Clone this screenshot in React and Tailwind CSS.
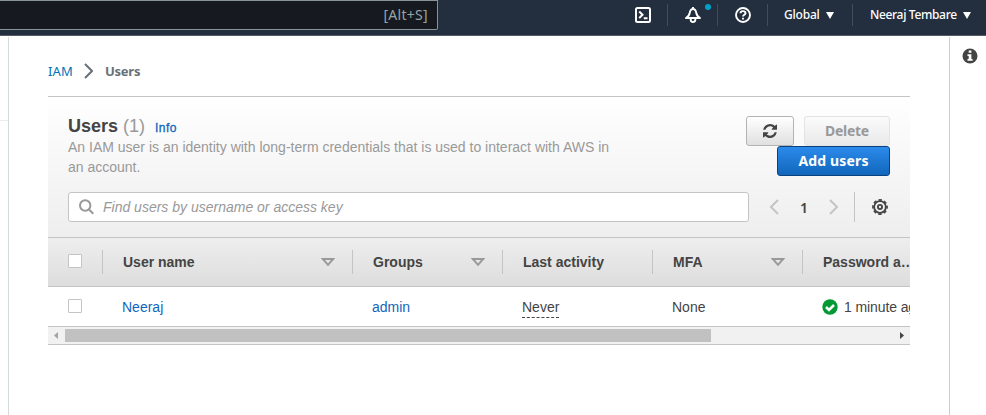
import React from "react";

function Caret() {
  return (
    <svg width="8" height="7" viewBox="0 0 8 7" className="block">
      <path d="M0 0h8L4 7z" fill="#fff" />
    </svg>
  );
}

function NavBar() {
  return (
    <header className="flex h-9 w-full border-b border-[#545b64] bg-[#232f3e] font-['Noto_Sans','Open_Sans',sans-serif] text-white">
      <div className="flex h-[30px] w-[438px] shrink-0 items-center justify-end rounded-br-[2px] border-y border-r border-[#879596] bg-[#161a20] pb-px pr-[9px] text-[14px] tracking-[0.3px] text-[#95a5a6]">
        [Alt+S]
      </div>
      <div className="mt-1 flex h-[22px] w-[230px] justify-end border-r border-[#414d5c] pr-4 pt-[3px]">
        <svg width="16" height="16" viewBox="0 0 16 16" fill="none" stroke="#fff" strokeWidth="2">
          <rect x="1" y="1" width="14" height="14" rx="1.500" />
          <path d="M4.200 4.500 7.500 7.800 4.200 11.100M8.800 11.200h3.700" />
        </svg>
      </div>
      <div className="relative mt-1 flex h-[22px] w-[50px] justify-center border-r border-[#414d5c] pt-[3px]">
        <svg width="16" height="16" viewBox="0 0 16 16" fill="none" stroke="#fff" strokeWidth="1.900" strokeLinejoin="round">
          <path d="M8 0v2M1 11h14c-2.300-1.200-3.300-2.800-3.700-5C10.900 3.600 9.900 2 8 2S5.100 3.600 4.700 6C4.300 8.200 3.300 9.800 1 11z" />
          <path d="M5.700 11.500v1.300c0 1.300 1 2.200 2.300 2.200s2.300-.9 2.300-2.200v-1.300" />
        </svg>
        <span className="absolute left-[37px] top-0 h-[6px] w-[6px] rounded-full bg-[#00a1c9]" />
      </div>
      <div className="mt-1 flex h-[22px] w-[50px] justify-center border-r border-[#414d5c] pt-[3px]">
        <svg width="16" height="16" viewBox="0 0 16 16" fill="none" stroke="#fff" strokeWidth="1.900">
          <circle cx="8" cy="8" r="7" />
          <path d="M5.500 6.300C5.500 4.900 6.600 4.100 8 4.100s2.500.8 2.500 2.100c0 1.500-2.500 1.600-2.500 3.400M8 10.800v1.700" />
        </svg>
      </div>
      <div className="mt-1 flex h-[22px] w-[85px] items-center border-r border-[#414d5c] pl-4">
        <span className="w-[42px] whitespace-nowrap text-[12px] font-medium leading-[22px] tracking-[-0.2px]">Global</span>
        <Caret />
      </div>
      <div className="mt-1 flex h-[22px] items-center pl-[17px]">
        <span className="w-[93px] whitespace-nowrap text-[12px] font-medium leading-[22px] tracking-[-0.33px]">Neeraj Tembare</span>
        <Caret />
      </div>
    </header>
  );
}

function Breadcrumb() {
  return (
    <nav className="flex h-5 items-center font-['Noto_Sans','Open_Sans',sans-serif] text-[13px] leading-5">
      <span className="w-9 tracking-[0.1px] text-[#0073bb]">IAM</span>
      <svg width="9" height="16" viewBox="0 0 9 16" fill="none" stroke="#687078" strokeWidth="2">
        <path d="M1 1l7 7-7 7" />
      </svg>
      <span className="ml-3 font-bold tracking-[-0.25px] text-[#687078]">Users</span>
    </nav>
  );
}

function Pagination() {
  return (
    <div className="flex h-[30px] items-center">
      <svg width="10" height="16" viewBox="0 0 10 16" fill="none" stroke="#c4c4c4" strokeWidth="2" className="ml-5">
        <path d="M9 1 2 8l7 7" />
      </svg>
      <span className="w-[50px] text-center font-['Noto_Sans',sans-serif] text-[14px] font-semibold text-[#444]">1</span>
      <svg width="10" height="16" viewBox="0 0 10 16" fill="none" stroke="#c4c4c4" strokeWidth="2">
        <path d="M1 1l7 7-7 7" />
      </svg>
      <span className="ml-[15px] h-[30px] w-px bg-[#c4c4c4]" />
      <svg width="16" height="16" viewBox="0 0 17 17" fill="none" stroke="#444" className="ml-[17px]">
        <circle cx="8.500" cy="8.500" r="6.200" strokeWidth="1.900" />
        <circle cx="8.500" cy="8.500" r="7.500" strokeWidth="1.800" strokeDasharray="3.500 2.390" strokeDashoffset="1.750" />
        <circle cx="8.500" cy="8.500" r="2.200" strokeWidth="2" />
      </svg>
    </div>
  );
}

function PanelHeader() {
  return (
    <div className="h-[140px] bg-linear-to-b from-white to-[#eee] px-5 pt-[19px]">
      <div className="flex h-[76px] justify-between">
        <div className="-mt-px w-[560px]">
          <h1 className="flex h-[22px] items-baseline text-[18px] leading-[22px]">
            <span className="w-[55px] font-bold text-[#444]">Users</span>
            <span className="w-8 text-[#999]">(1)</span>
            <span className="text-[12px] font-medium tracking-[0.5px] text-[#1166bb] [-webkit-text-stroke:0.3px_#1166bb]">Info</span>
          </h1>
          <p className="text-[14px] leading-5 text-[#999]">
            An IAM user is an identity with long-term credentials that is used to interact with AWS in
            <br />
            an account.
          </p>
        </div>
        <div className="flex flex-col items-end font-['Noto_Sans','Open_Sans',sans-serif] text-[14px] font-bold">
          <div className="flex gap-2.5">
            <button className="flex h-[30px] w-12 items-center justify-center rounded-[3px] border border-[#b3b3b3] bg-linear-to-b from-white to-[#e0e0e0]">
              <svg width="14" height="14" viewBox="0 0 1536 1536" fill="#444">
                <path d="M1511 928q0 5-1 7-64 268-268 434.500T764 1536q-146 0-282.500-55T238 1324l-129 129q-19 19-45 19t-45-19-19-45V960q0-26 19-45t45-19h448q26 0 45 19t19 45-19 45l-137 137q71 66 161 102t187 36q134 0 250-65t186-179q11-17 53-117 8-23 30-23h192q13 0 22.500 9.500t9.500 22.500zm25-800v448q0 26-19 45t-45 19h-448q-26 0-45-19t-19-45 19-45l138-138Q969 256 768 256q-134 0-250 65T332 500q-11 17-53 117-8 23-30 23H50q-13 0-22.500-9.500T18 608v-7q65-268 270-434.500T768 0q146 0 284 55.500T1297 212l130-129q19-19 45-19t45 19 19 45z" />
              </svg>
            </button>
            <button className="h-[30px] w-[86px] rounded-[3px] border border-[#e3e3e3] bg-linear-to-b from-[#fbfbfb] to-[#e9e9e9] pb-0.5 tracking-[-0.3px] text-[#999]">
              Delete
            </button>
          </div>
          <button className="h-[30px] w-[113px] rounded-[3px] border border-[#0a4280] bg-linear-to-b from-[#2b8beb] to-[#1166bb] pb-0.5 tracking-[0.15px] text-white">
            Add users
          </button>
        </div>
      </div>
      <div className="flex">
        <div className="flex h-[30px] w-[681px] items-center rounded-[3px] border border-[#c4c4c4] bg-white pl-2.5">
          <svg width="16" height="16" viewBox="0 0 16 16" fill="none" stroke="#999" strokeWidth="2">
            <circle cx="6.200" cy="6.500" r="5.200" />
            <path d="m10 10.500 4.300 4.300" />
          </svg>
          <span className="ml-2 text-[14px] italic text-[#999]">Find users by username or access key</span>
        </div>
        <Pagination />
      </div>
    </div>
  );
}

function SortIcon() {
  return (
    <svg width="14" height="9" viewBox="0 0 14 9" fill="none" stroke="#999" strokeWidth="2">
      <path d="M1.800 1h10.400L7 6.800z" />
    </svg>
  );
}

function HeadCell({ label, sortable, wide }) {
  return (
    <div
      className={`flex h-6 shrink-0 items-center justify-between border-l border-[#c4c4c4] pl-5 pr-[17px] ${wide ? "w-[250px]" : "w-[150px]"}`}
    >
      <span className="whitespace-nowrap">{label}</span>
      {sortable && <SortIcon />}
    </div>
  );
}

function Checkbox() {
  return <span className="-mt-px block h-[14px] w-[14px] shrink-0 rounded-[1px] border border-[#c4c4c4] bg-white" />;
}

function UsersTable() {
  return (
    <div className="w-full overflow-hidden text-[14px] text-[#444]">
      <div className="flex h-[50px] items-center overflow-hidden border-y border-[#c4c4c4] bg-linear-to-b from-[#eee] to-[#ddd] font-bold">
        <div className="w-[54px] shrink-0 pb-px pl-5">
          <Checkbox />
        </div>
        <HeadCell label="User name" sortable wide />
        <HeadCell label="Groups" sortable />
        <HeadCell label="Last activity" />
        <HeadCell label="MFA" sortable />
        <div className="flex h-6 w-[108px] shrink-0 items-center border-l border-[#c4c4c4] pl-5">
          <span className="whitespace-nowrap">Password a…</span>
        </div>
      </div>
      <div className="flex h-[39px] items-center overflow-hidden bg-white pt-px">
        <div className="w-[54px] shrink-0 pb-0.5 pl-5">
          <Checkbox />
        </div>
        <div className="w-[250px] shrink-0 pl-5 text-[#1166bb]">Neeraj</div>
        <div className="w-[150px] shrink-0 pl-5 text-[#1166bb]">admin</div>
        <div className="w-[150px] shrink-0 pl-5">
          <span className="block h-[22px] w-[37px] border-b border-dashed border-[#444] leading-[22px]">Never</span>
        </div>
        <div className="w-[150px] shrink-0 pl-5">None</div>
        <div className="flex w-[150px] shrink-0 items-center gap-1.5 whitespace-nowrap pl-5">
          <svg width="16" height="16" viewBox="0 0 16 16" fill="none">
            <circle cx="8" cy="8" r="7.700" fill="#093" />
            <path d="m4 8 3 3 5-5" stroke="#fff" strokeWidth="2.500" />
          </svg>
          <span className="tracking-[-0.1px]">1 minute ago</span>
        </div>
      </div>
    </div>
  );
}

function ScrollBar() {
  return (
    <div className="flex h-[19px] items-center border-y border-[#c4c4c4] bg-[#f1f1f1]">
      <svg width="17" height="7" viewBox="0 0 17 7" className="block">
        <path d="M10 0v7L6 3.500z" fill="#a3a3a3" />
      </svg>
      <div className="h-[13px] w-[646px] bg-[#c1c1c1]" />
      <svg width="17" height="7" viewBox="0 0 17 7" className="ml-auto block">
        <path d="M7 0v7l4-3.500z" fill="#444" />
      </svg>
    </div>
  );
}

export default function App() {
  return (
    <div className="flex h-[415px] w-[986px] flex-col overflow-hidden bg-white font-['Liberation_Sans',Arial,sans-serif]">
      <NavBar />
      <div className="flex flex-1 pt-px">
        <aside className="w-[9px] border-r border-[#d5dbdb]">
          <div className="h-[84px] border-b border-[#eaeded]" />
        </aside>
        <main className="flex-1 px-[39px] pt-6">
          <Breadcrumb />
          <section className="mt-[15px] w-[862px] border-t border-[#c4c4c4]">
            <PanelHeader />
            <UsersTable />
            <ScrollBar />
          </section>
        </main>
        <aside className="flex w-[37px] justify-center border-l border-[#ccc] pl-[4px] pt-[11px]">
          <svg width="16" height="16" viewBox="0 0 16 16">
            <circle cx="8" cy="8" r="7.500" fill="#444" />
            <path d="M6.700 2.500h2.700v2.300H6.700zM5.500 6.300h3.900v4.700h1.200v1.700H5.500V11h1.200V8H5.500z" fill="#fff" />
          </svg>
        </aside>
      </div>
    </div>
  );
}
